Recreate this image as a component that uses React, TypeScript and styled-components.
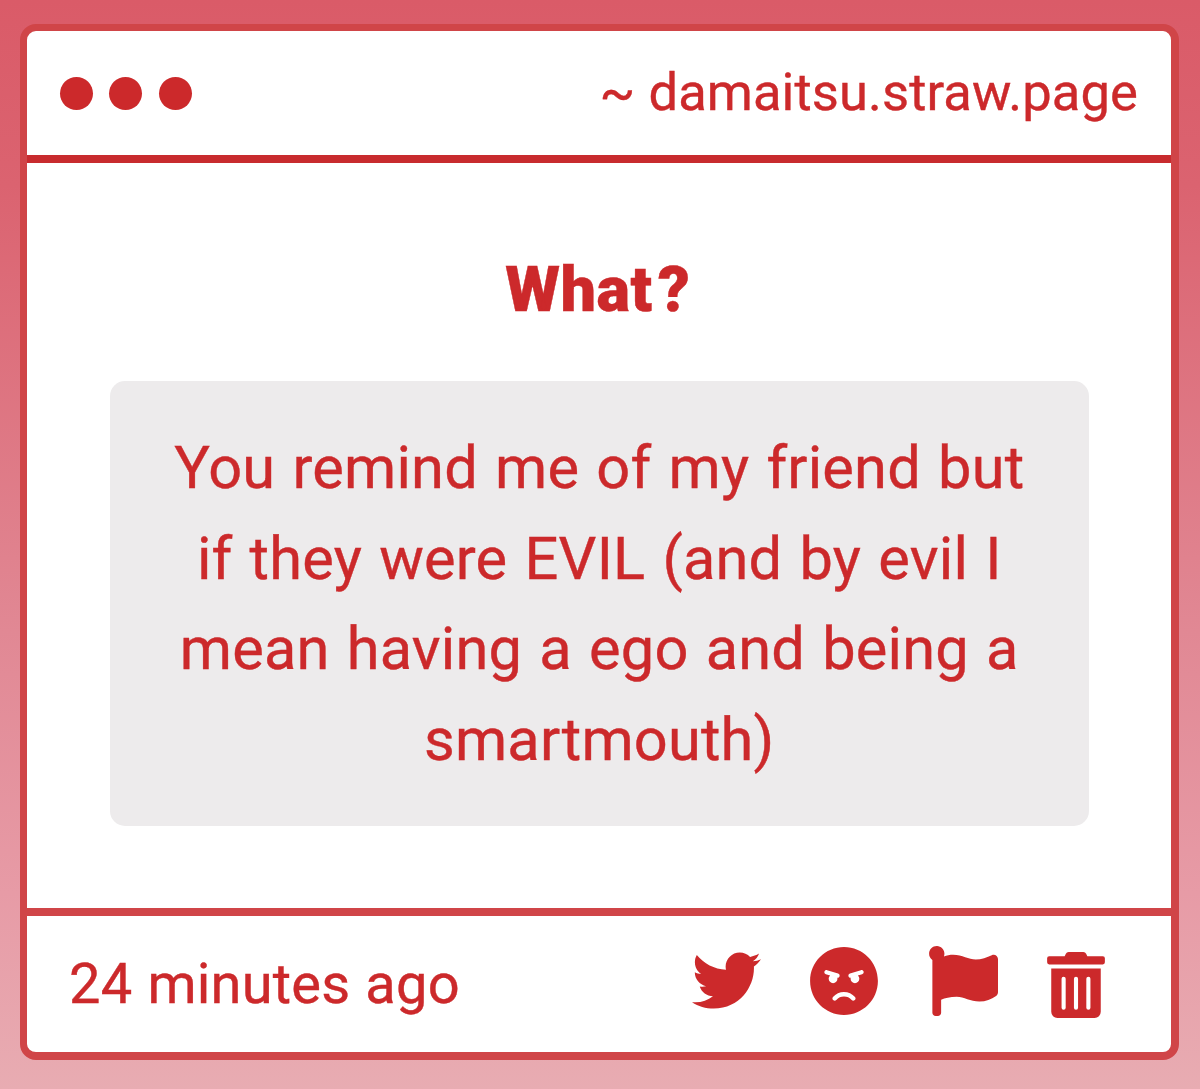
import type { FC } from "react";
import styled, { createGlobalStyle } from "styled-components";
import { FaAngry, FaFlag, FaTrashAlt, FaTwitter } from "react-icons/fa";

const colors = {
  main: "#cc292b",
  border: "#d04548",
  line: "#c82b2e",
  box: "#edebec",
};

const App: FC = () => {
  return (
    <>
      <GlobalStyle />
      <Page>
        <Card>
          <Header>
            <Dots>
              <Dot />
              <Dot />
              <Dot />
            </Dots>
            <SiteName>~ damaitsu.straw.page</SiteName>
          </Header>
          <Content>
            <Title>
              What<span>?</span>
            </Title>
            <Message>
              You remind me of my friend but if they were EVIL (and by evil I
              mean having a ego and being a smartmouth)
            </Message>
          </Content>
          <Footer>
            <Time>24 minutes ago</Time>
            <Actions>
              <Action aria-label="Twitter" $size={69}>
                <FaTwitter />
              </Action>
              <Action aria-label="Block" $size={70}>
                <FaAngry />
              </Action>
              <Action aria-label="Report" $size={70}>
                <FaFlag />
              </Action>
              <Action aria-label="Delete" $size={66} $drop={8} $trim={4}>
                <FaTrashAlt />
              </Action>
            </Actions>
          </Footer>
        </Card>
      </Page>
    </>
  );
};

export default App;

const GlobalStyle = createGlobalStyle`
  * {
    box-sizing: border-box;
  }
  body {
    margin: 0;
    font-family: Roboto, "Liberation Sans", sans-serif;
    color: ${colors.main};
    -webkit-text-stroke: 0.4px ${colors.main};
  }
`;

const Page = styled.div`
  height: 1089px;
  padding: 24px 21px 29px 20px;
  background: linear-gradient(
    #da5b68 0%,
    #db6370 17%,
    #e18894 58%,
    #e79ba6 82%,
    #e8acb2 100%
  );
`;

const Card = styled.div`
  display: flex;
  flex-direction: column;
  height: 100%;
  border: 8px solid ${colors.border};
  border-width: 7px 8px 8px 7px;
  border-radius: 16px;
  background: #fff;
`;

const Header = styled.div`
  display: flex;
  justify-content: space-between;
  align-items: center;
  height: 132px;
  padding: 0 33px;
  border-bottom: 8px solid ${colors.line};
`;

const Dots = styled.div`
  display: flex;
  gap: 16.4px;
`;

const Dot = styled.span`
  width: 33px;
  height: 33px;
  border-radius: 50%;
  background: ${colors.main};
`;

const SiteName = styled.div`
  padding-bottom: 3px;
  font-size: 52.5px;
  letter-spacing: 0.1px;
  white-space: nowrap;
`;

const Content = styled.div`
  flex: 1;
  padding: 87px 82px 0 82.5px;
  text-align: center;
`;

const Title = styled.h1`
  margin: 0 0 51px;
  font-size: 63px;
  font-weight: 900;
  line-height: 80px;
  letter-spacing: 0.5px;
  span {
    margin: 0 3px 0 5px;
  }
`;

const Message = styled.div`
  height: 445px;
  padding: 42px 60px 0;
  border-radius: 15px;
  background: ${colors.box};
  font-size: 59.5px;
  line-height: 90.6px;
  letter-spacing: 0.2px;
  word-spacing: 2.2px;
`;

const Footer = styled.div`
  display: flex;
  justify-content: space-between;
  align-items: center;
  height: 144px;
  padding: 0 66px 0 42px;
  border-top: 8px solid ${colors.border};
`;

const Time = styled.div`
  font-size: 56px;
  letter-spacing: 0.2px;
  word-spacing: 1px;
`;

const Actions = styled.div`
  display: flex;
  align-items: center;
  gap: 48.8px;
  padding-bottom: 7px;
`;

const Action = styled.button<{ $size: number; $drop?: number; $trim?: number }>`
  display: flex;
  margin: 0 ${({ $trim = 0 }) => -$trim}px;
  padding: ${({ $drop = 0 }) => $drop}px 0 0;
  border: 0;
  background: none;
  color: inherit;
  font-size: ${({ $size }) => $size}px;
`;
